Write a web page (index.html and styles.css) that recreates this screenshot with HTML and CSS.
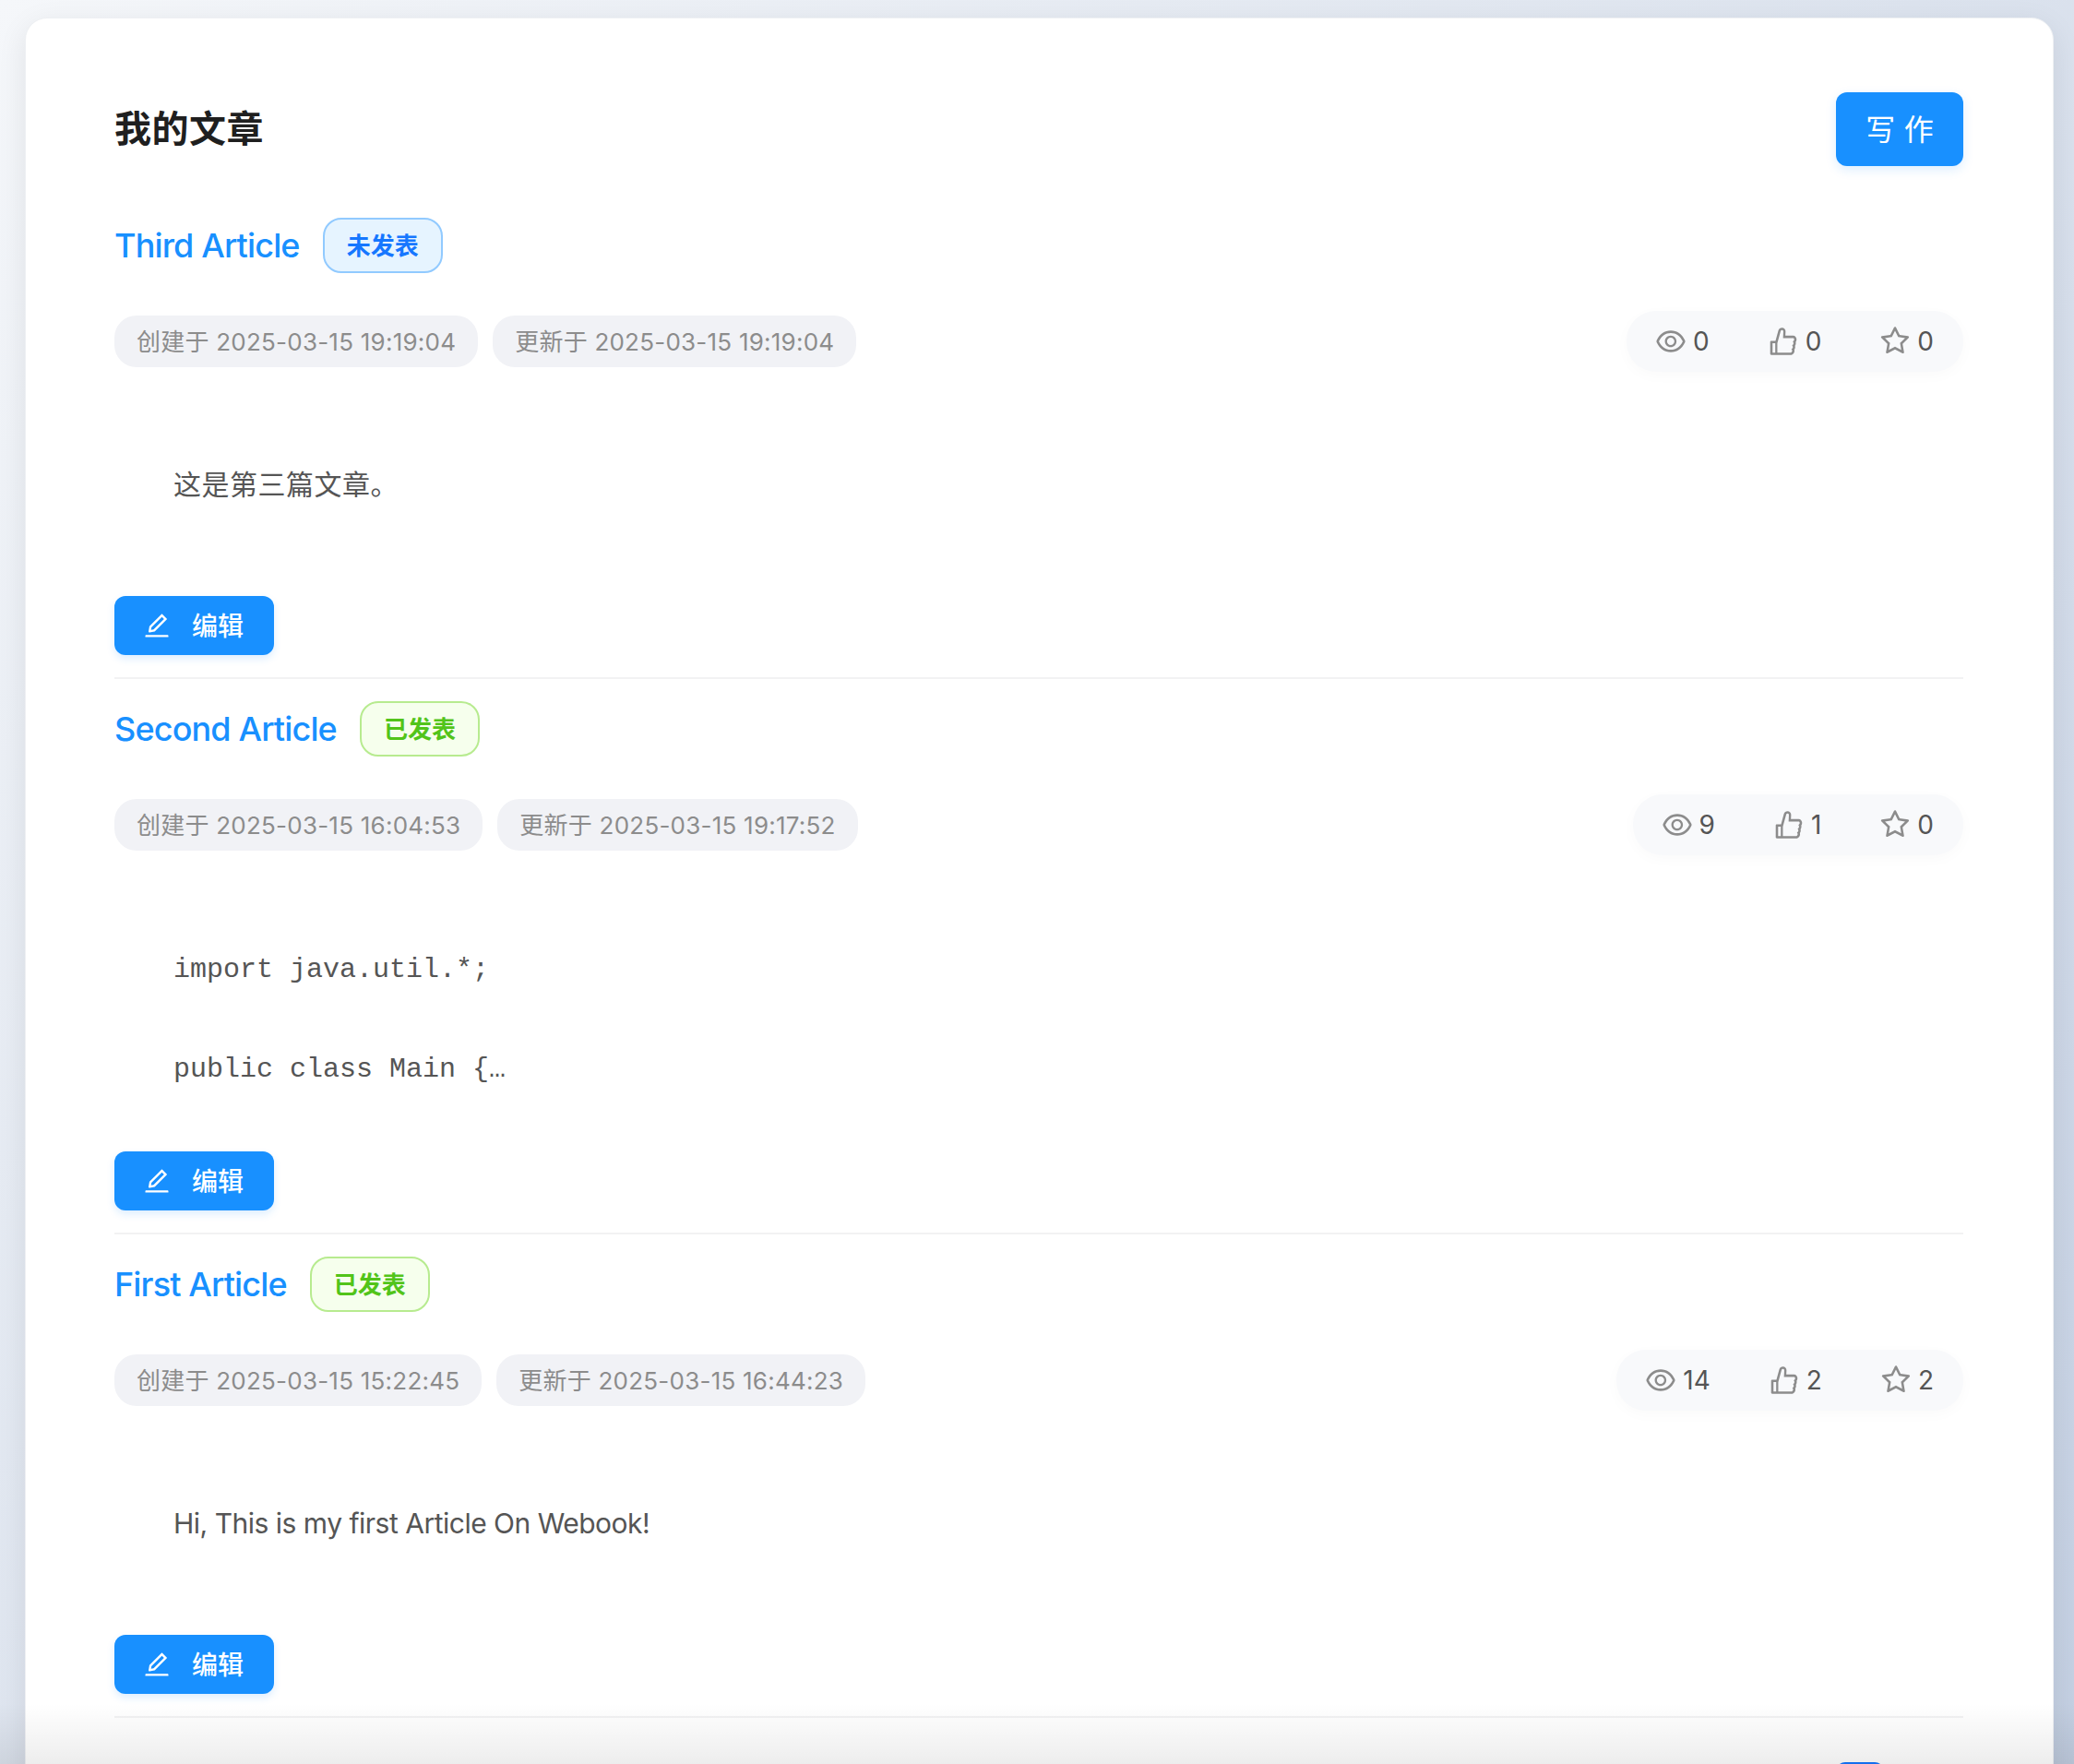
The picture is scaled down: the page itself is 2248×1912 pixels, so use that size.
FILE: index.html
```html
<!DOCTYPE html>
<html lang="zh">
<head>
<meta charset="utf-8">
<title>我的文章</title>
<link rel="stylesheet" href="styles.css">
</head>
<body>
<svg class="defs" width="0" height="0" aria-hidden="true">
  <symbol id="i-eye" viewBox="64 64 896 896"><path d="M942.2 486.2C847.4 286.5 704.1 186 512 186c-192.2 0-335.4 100.5-430.2 300.3a60.3 60.3 0 000 51.5C176.6 737.5 319.9 838 512 838c192.2 0 335.4-100.5 430.2-300.3 7.7-16.2 7.7-35 0-51.5zM512 766c-161.3 0-279.4-81.8-362.7-254C232.6 339.8 350.7 258 512 258c161.3 0 279.4 81.8 362.7 254C791.5 684.2 673.4 766 512 766zm-4-430c-97.2 0-176 78.8-176 176s78.8 176 176 176 176-78.8 176-176-78.8-176-176-176zm0 288c-61.9 0-112-50.1-112-112s50.1-112 112-112 112 50.1 112 112-50.1 112-112 112z"/></symbol>
  <symbol id="i-like" viewBox="64 64 896 896"><path d="M885.9 533.7c16.8-22.2 26.1-49.4 26.1-77.7 0-44.9-25.1-87.4-65.5-111.1a67.67 67.67 0 00-34.3-9.3H572.4l6-122.9c1.4-29.7-9.1-57.9-29.5-79.4A106.62 106.62 0 00471 99.9c-52 0-98 35-111.8 85.1l-85.9 311H144c-17.7 0-32 14.3-32 32v364c0 17.7 14.3 32 32 32h601.3c9.2 0 18.2-1.8 26.5-5.4 47.6-20.3 78.3-66.8 78.3-118.4 0-12.6-1.8-25-5.4-37 16.8-22.2 26.1-49.4 26.1-77.7 0-12.6-1.8-25-5.4-37 16.8-22.2 26.1-49.4 26.1-77.7-.2-12.6-2-25.1-5.6-37.1zM184 852V568h81v284h-81zm636.4-353l-21.9 19 13.9 25.4a56.2 56.2 0 016.9 27.3c0 16.5-7.2 32.2-19.6 43l-21.9 19 13.9 25.4a56.2 56.2 0 016.9 27.3c0 16.5-7.2 32.2-19.6 43l-21.9 19 13.9 25.4a56.2 56.2 0 016.9 27.3c0 22.4-13.2 42.6-33.6 51.8H329V564.8l99.5-360.5a44.1 44.1 0 0142.2-32.3c7.9 0 15.7 2.3 21.9 6.9 12.4 9.2 19.3 23.2 18.7 38l-9.6 198.4h314.4C829 418.5 840 436.9 840 456c0 16.5-7.2 32.1-19.6 43z"/></symbol>
  <symbol id="i-star" viewBox="64 64 896 896"><path d="M908.1 353.1l-253.9-36.9L540.7 86.1c-3.1-6.3-8.2-11.4-14.5-14.5-15.8-7.8-35-1.3-42.9 14.5L369.8 316.2l-253.9 36.9c-7 1-13.4 4.3-18.3 9.3a32.05 32.05 0 00.6 45.3l183.7 179.1-43.4 252.9a31.95 31.95 0 0046.4 33.7L512 754l227.1 119.4c6.2 3.3 13.4 4.4 20.3 3.2 17.4-3 29.1-19.5 26.1-36.9l-43.4-252.9 183.7-179.1c5-4.9 8.3-11.3 9.3-18.3 2.7-17.5-9.5-33.7-27-36.3zM664.8 561.6l36.1 210.3L512 672.7 323.1 772l36.1-210.3-152.8-149L417.6 382 512 190.7 606.4 382l211.2 30.7-152.8 148.9z"/></symbol>
  <symbol id="i-edit" viewBox="64 64 896 896"><path d="M257.7 752c2 0 4-.2 6-.5L431.9 722c2-.4 3.9-1.3 5.3-2.8l423.9-423.9a9.96 9.96 0 000-14.1L694.9 114.9c-1.9-1.9-4.4-2.9-7.1-2.9s-5.2 1-7.1 2.9L256.8 538.8c-1.5 1.5-2.4 3.3-2.8 5.3l-29.5 168.2a33.5 33.5 0 009.4 29.8c6.6 6.4 14.9 9.9 23.8 9.9zm67.4-174.4L687.8 215l73.3 73.3-362.7 362.6-88.9 15.7 15.6-89zM880 836H144c-17.7 0-32 14.3-32 32v36c0 4.4 3.6 8 8 8h784c4.4 0 8-3.6 8-8v-36c0-17.7-14.3-32-32-32z"/></symbol>
</svg>
<div class="page">
  <main class="card">
    <header class="card-head">
      <h1 class="heading">我的文章</h1>
      <button class="write-btn">写作</button>
    </header>

    <article class="article">
      <div class="title-row">
        <a class="title">Third Article</a>
        <span class="tag tag-draft">未发表</span>
      </div>
      <div class="meta-row">
        <div class="dates">
          <span class="date">创建于 2025-03-15 19:19:04</span>
          <span class="date">更新于 2025-03-15 19:19:04</span>
        </div>
        <div class="stats">
          <span class="stat"><svg class="stat-icon"><use href="#i-eye"/></svg>0</span>
          <span class="stat"><svg class="stat-icon"><use href="#i-like"/></svg>0</span>
          <span class="stat"><svg class="stat-icon"><use href="#i-star"/></svg>0</span>
        </div>
      </div>
      <div class="body"><p class="para para-cjk">这是第三篇文章。</p></div>
      <button class="edit-btn"><svg class="edit-icon"><use href="#i-edit"/></svg><span class="edit-label">编辑</span></button>
    </article>

    <article class="article">
      <div class="title-row">
        <a class="title">Second Article</a>
        <span class="tag tag-live">已发表</span>
      </div>
      <div class="meta-row">
        <div class="dates">
          <span class="date">创建于 2025-03-15 16:04:53</span>
          <span class="date">更新于 2025-03-15 19:17:52</span>
        </div>
        <div class="stats">
          <span class="stat"><svg class="stat-icon"><use href="#i-eye"/></svg>9</span>
          <span class="stat"><svg class="stat-icon"><use href="#i-like"/></svg>1</span>
          <span class="stat"><svg class="stat-icon"><use href="#i-star"/></svg>0</span>
        </div>
      </div>
      <div class="body body-code">
        <p class="code">import java.util.*;</p>
        <p class="code">public class Main {…</p>
      </div>
      <button class="edit-btn"><svg class="edit-icon"><use href="#i-edit"/></svg><span class="edit-label">编辑</span></button>
    </article>

    <article class="article">
      <div class="title-row">
        <a class="title">First Article</a>
        <span class="tag tag-live">已发表</span>
      </div>
      <div class="meta-row">
        <div class="dates">
          <span class="date">创建于 2025-03-15 15:22:45</span>
          <span class="date">更新于 2025-03-15 16:44:23</span>
        </div>
        <div class="stats">
          <span class="stat"><svg class="stat-icon"><use href="#i-eye"/></svg>14</span>
          <span class="stat"><svg class="stat-icon"><use href="#i-like"/></svg>2</span>
          <span class="stat"><svg class="stat-icon"><use href="#i-star"/></svg>2</span>
        </div>
      </div>
      <div class="body"><p class="para para-latin">Hi, This is my first Article On Webook!</p></div>
      <button class="edit-btn"><svg class="edit-icon"><use href="#i-edit"/></svg><span class="edit-label">编辑</span></button>
    </article>

    <div class="pager"><span class="pager-item"></span></div>
  </main>
  <div class="fade"></div>
</div>
</body>
</html>
```

FILE: styles.css
```css
* { box-sizing: border-box; }
html, body { margin: 0; padding: 0; height: 1912px; overflow: hidden; }
body {
  font-family: Inter, "Noto Sans CJK SC", sans-serif;
  color: #1f1f1f;
}
.defs { position: absolute; }
.page {
  position: relative;
  height: 1912px;
  overflow: hidden;
  padding: 19px 22px 0 27px;
  background: linear-gradient(135deg, #f5f7fa 0%, #c3cfe2 100%);
}
.card {
  height: 2400px;
  background: #fff;
  border: 1px solid #eef0f3;
  border-radius: 24px;
  padding: 80px 97px 0 96px;
  box-shadow: 0 8px 32px rgba(0, 0, 0, 0.08);
}
.card-head {
  display: flex;
  justify-content: space-between;
  align-items: center;
  margin-bottom: 56px;
}
.heading { margin: 0; font-size: 40px; letter-spacing: 0.5px; line-height: 80px; font-weight: 700; color: #1f1f1f; }
.write-btn {
  height: 80px;
  width: 138px;
  padding: 0 0 5px;
  border: 0;
  border-radius: 12px;
  background: #1890ff;
  color: #fff;
  font-family: inherit;
  font-size: 32px;
  letter-spacing: 0.3em;
  text-indent: 0.3em;
  box-shadow: 0 4px 12px rgba(24, 144, 255, 0.15);
}
.article {
  padding-bottom: 24px;
  margin-bottom: 24px;
  border-bottom: 2px solid #f2f2f3;
}
.title-row { display: flex; align-items: center; gap: 25px; height: 60px; margin-bottom: 46px; }
.title { font-size: 36px; font-weight: 500; letter-spacing: -0.85px; color: #1890ff; line-height: 60px; }
.tag {
  height: 60px;
  padding: 0 24px;
  border: 2px solid;
  border-radius: 20px;
  font-size: 26px;
  font-weight: 700;
  line-height: 58px;
}
.tag-draft { background: #e6f4ff; border-color: #91caff; color: #1677ff; }
.tag-live { background: #f6ffed; border-color: #b7eb8f; color: #52c41a; }
.meta-row { display: flex; justify-content: space-between; align-items: center; height: 56px; }
.dates { display: flex; gap: 16px; }
.date {
  height: 56px;
  padding: 0 24px;
  border-radius: 24px;
  background: #f1f2f6;
  color: #8c8c8c;
  font-size: 26px;
  letter-spacing: 0.23px;
  line-height: 58px;
}
.stats {
  display: flex;
  gap: 64px;
  height: 66px;
  padding: 0 32px;
  align-items: center;
  border-radius: 32px;
  background: #f8f9fb;
  box-shadow: 0 4px 16px rgba(0, 0, 0, 0.025);
  font-size: 28px;
  color: #555;
}
.stat { display: flex; align-items: center; gap: 8px; line-height: 32px; }
.stat-icon { width: 32px; height: 32px; fill: #8c8c8c; }
.body { padding: 103px 0 97px; }
.body-code { padding: 105px 0 65px; }
.para {
  margin: 0;
  padding-left: 64px;
  font-size: 30px;
  line-height: 48px;
  color: #555;
}
.para-cjk { letter-spacing: 0.5px; }
.para-latin { letter-spacing: -0.5px; }
.code {
  margin: 0 0 60px;
  padding-left: 64px;
  font-family: "Liberation Mono", monospace;
  font-size: 30px;
  line-height: 48px;
  color: #555;
}
.code:last-child { margin-bottom: 0; }
.edit-btn {
  display: flex;
  align-items: center;
  gap: 24px;
  height: 64px;
  width: 173px;
  padding: 0 32px;
  border: 0;
  border-radius: 12px;
  background: #1890ff;
  color: #fff;
  font-family: inherit;
  font-size: 28px;
  font-weight: 500;
  box-shadow: 0 4px 8px rgba(24, 144, 255, 0.15);
}
.edit-icon { width: 28px; height: 28px; fill: #fff; flex: none; }
.edit-label { padding-bottom: 2px; }
.pager { display: flex; justify-content: flex-end; padding: 24px 86px 0 0; }
.pager-item { width: 52px; height: 52px; border-radius: 10px; background: #1677ff; }
.fade {
  position: absolute;
  left: 0;
  right: 0;
  bottom: 0;
  height: 66px;
  background: linear-gradient(to bottom, rgba(0, 0, 0, 0), rgba(0, 0, 0, 0.07));
}
```
